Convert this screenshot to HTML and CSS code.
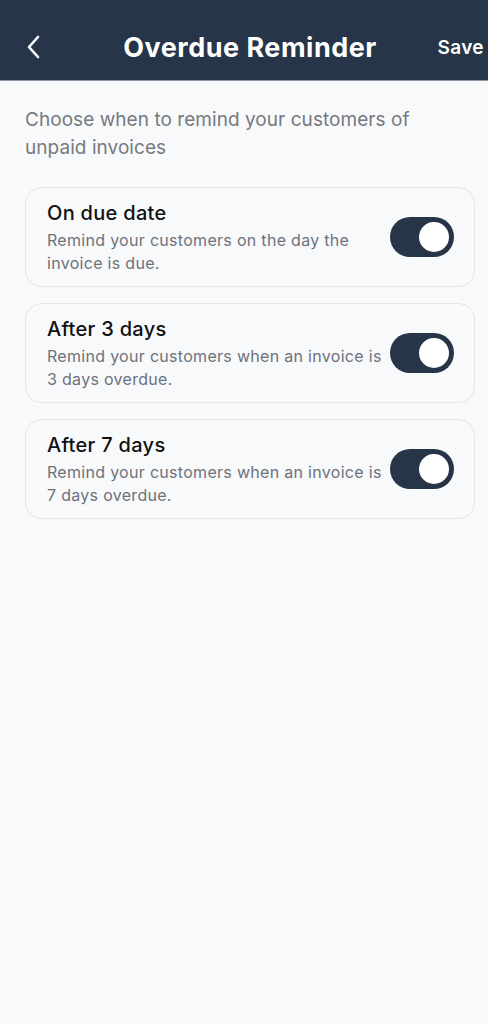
FILE: index.html
```html
<!DOCTYPE html>
<html>
<head>
<meta charset="utf-8">
<link rel="stylesheet" href="styles.css">
</head>
<body>
<div class="page">
  <header class="topbar">
    <button class="back" aria-label="Back">
      <svg width="18" height="24" viewBox="0 0 18 24"><path d="M13 2 L4 12 L13 22" fill="none" stroke="#fff" stroke-width="2.6" stroke-linecap="round" stroke-linejoin="round"/></svg>
    </button>
    <h1 class="title">Overdue Reminder</h1>
    <span class="save">Save</span>
  </header>
  <main class="content">
    <p class="intro">Choose when to remind your customers of unpaid invoices</p>
    <div class="card">
      <div class="card-text">
        <div class="card-title">On due date</div>
        <div class="card-desc">Remind your customers on the day the invoice is due.</div>
      </div>
      <div class="toggle"><span class="knob"></span></div>
    </div>
    <div class="card">
      <div class="card-text">
        <div class="card-title">After 3 days</div>
        <div class="card-desc">Remind your customers when an invoice is 3 days overdue.</div>
      </div>
      <div class="toggle"><span class="knob"></span></div>
    </div>
    <div class="card">
      <div class="card-text">
        <div class="card-title">After 7 days</div>
        <div class="card-desc">Remind your customers when an invoice is 7 days overdue.</div>
      </div>
      <div class="toggle"><span class="knob"></span></div>
    </div>
  </main>
</div>
</body>
</html>
```
FILE: styles.css
```css
html, body {
  margin: 0;
  padding: 0;
  overflow: hidden;
  background: #f8f9fb;
}
body {
  font-family: Inter, "Noto Sans", sans-serif;
  min-height: 1024px;
}
.page {
  width: 500px;
  min-height: 1024px;
  background: #f8f9fb;
}
.topbar {
  height: 81px;
  background: #263548;
  border-bottom: 1px solid #8a97a8;
  display: grid;
  grid-template-columns: 90px 1fr 90px;
  align-items: center;
  box-sizing: border-box;
  padding-top: 14px;
}
.back {
  background: none;
  border: 0;
  padding: 0 0 0 25px;
  display: flex;
  align-items: center;
  justify-self: start;
}
.title {
  margin: 0;
  text-align: center;
  color: #fff;
  font-size: 27px;
  font-weight: 700;
  letter-spacing: 0.5px;
  white-space: nowrap;
}
.save {
  justify-self: end;
  padding-right: 16px;
  color: #fff;
  font-size: 19px;
  font-weight: 600;
  letter-spacing: 0.4px;
}
.content {
  padding: 25px 25px 0 25px;
  display: flex;
  flex-direction: column;
  gap: 16px;
}
.intro {
  margin: 0 0 9px 0;
  color: #76797f;
  font-size: 19px;
  line-height: 28px;
  letter-spacing: 0.05px;
  padding-right: 40px;
}
.card {
  height: 100px;
  box-sizing: border-box;
  border: 1px solid #e3e5e8;
  border-radius: 16px;
  padding: 0 20px 0 21px;
  display: flex;
  align-items: center;
  justify-content: space-between;
  gap: 6px;
}
.card-text {
  display: flex;
  flex-direction: column;
  gap: 3px;
}
.card-title {
  color: #111;
  font-size: 20px;
  font-weight: 500;
  line-height: 26px;
  letter-spacing: 0.3px;
}
.card-desc {
  color: #6d727a;
  font-size: 16px;
  line-height: 23px;
  letter-spacing: 0.3px;
  max-width: 340px;
}
.toggle {
  flex: none;
  width: 64px;
  height: 40px;
  border-radius: 20px;
  background: #263548;
  display: flex;
  align-items: center;
  justify-content: flex-end;
  padding-right: 5px;
  box-sizing: border-box;
}
.knob {
  width: 30px;
  height: 30px;
  border-radius: 50%;
  background: #fff;
}
```
